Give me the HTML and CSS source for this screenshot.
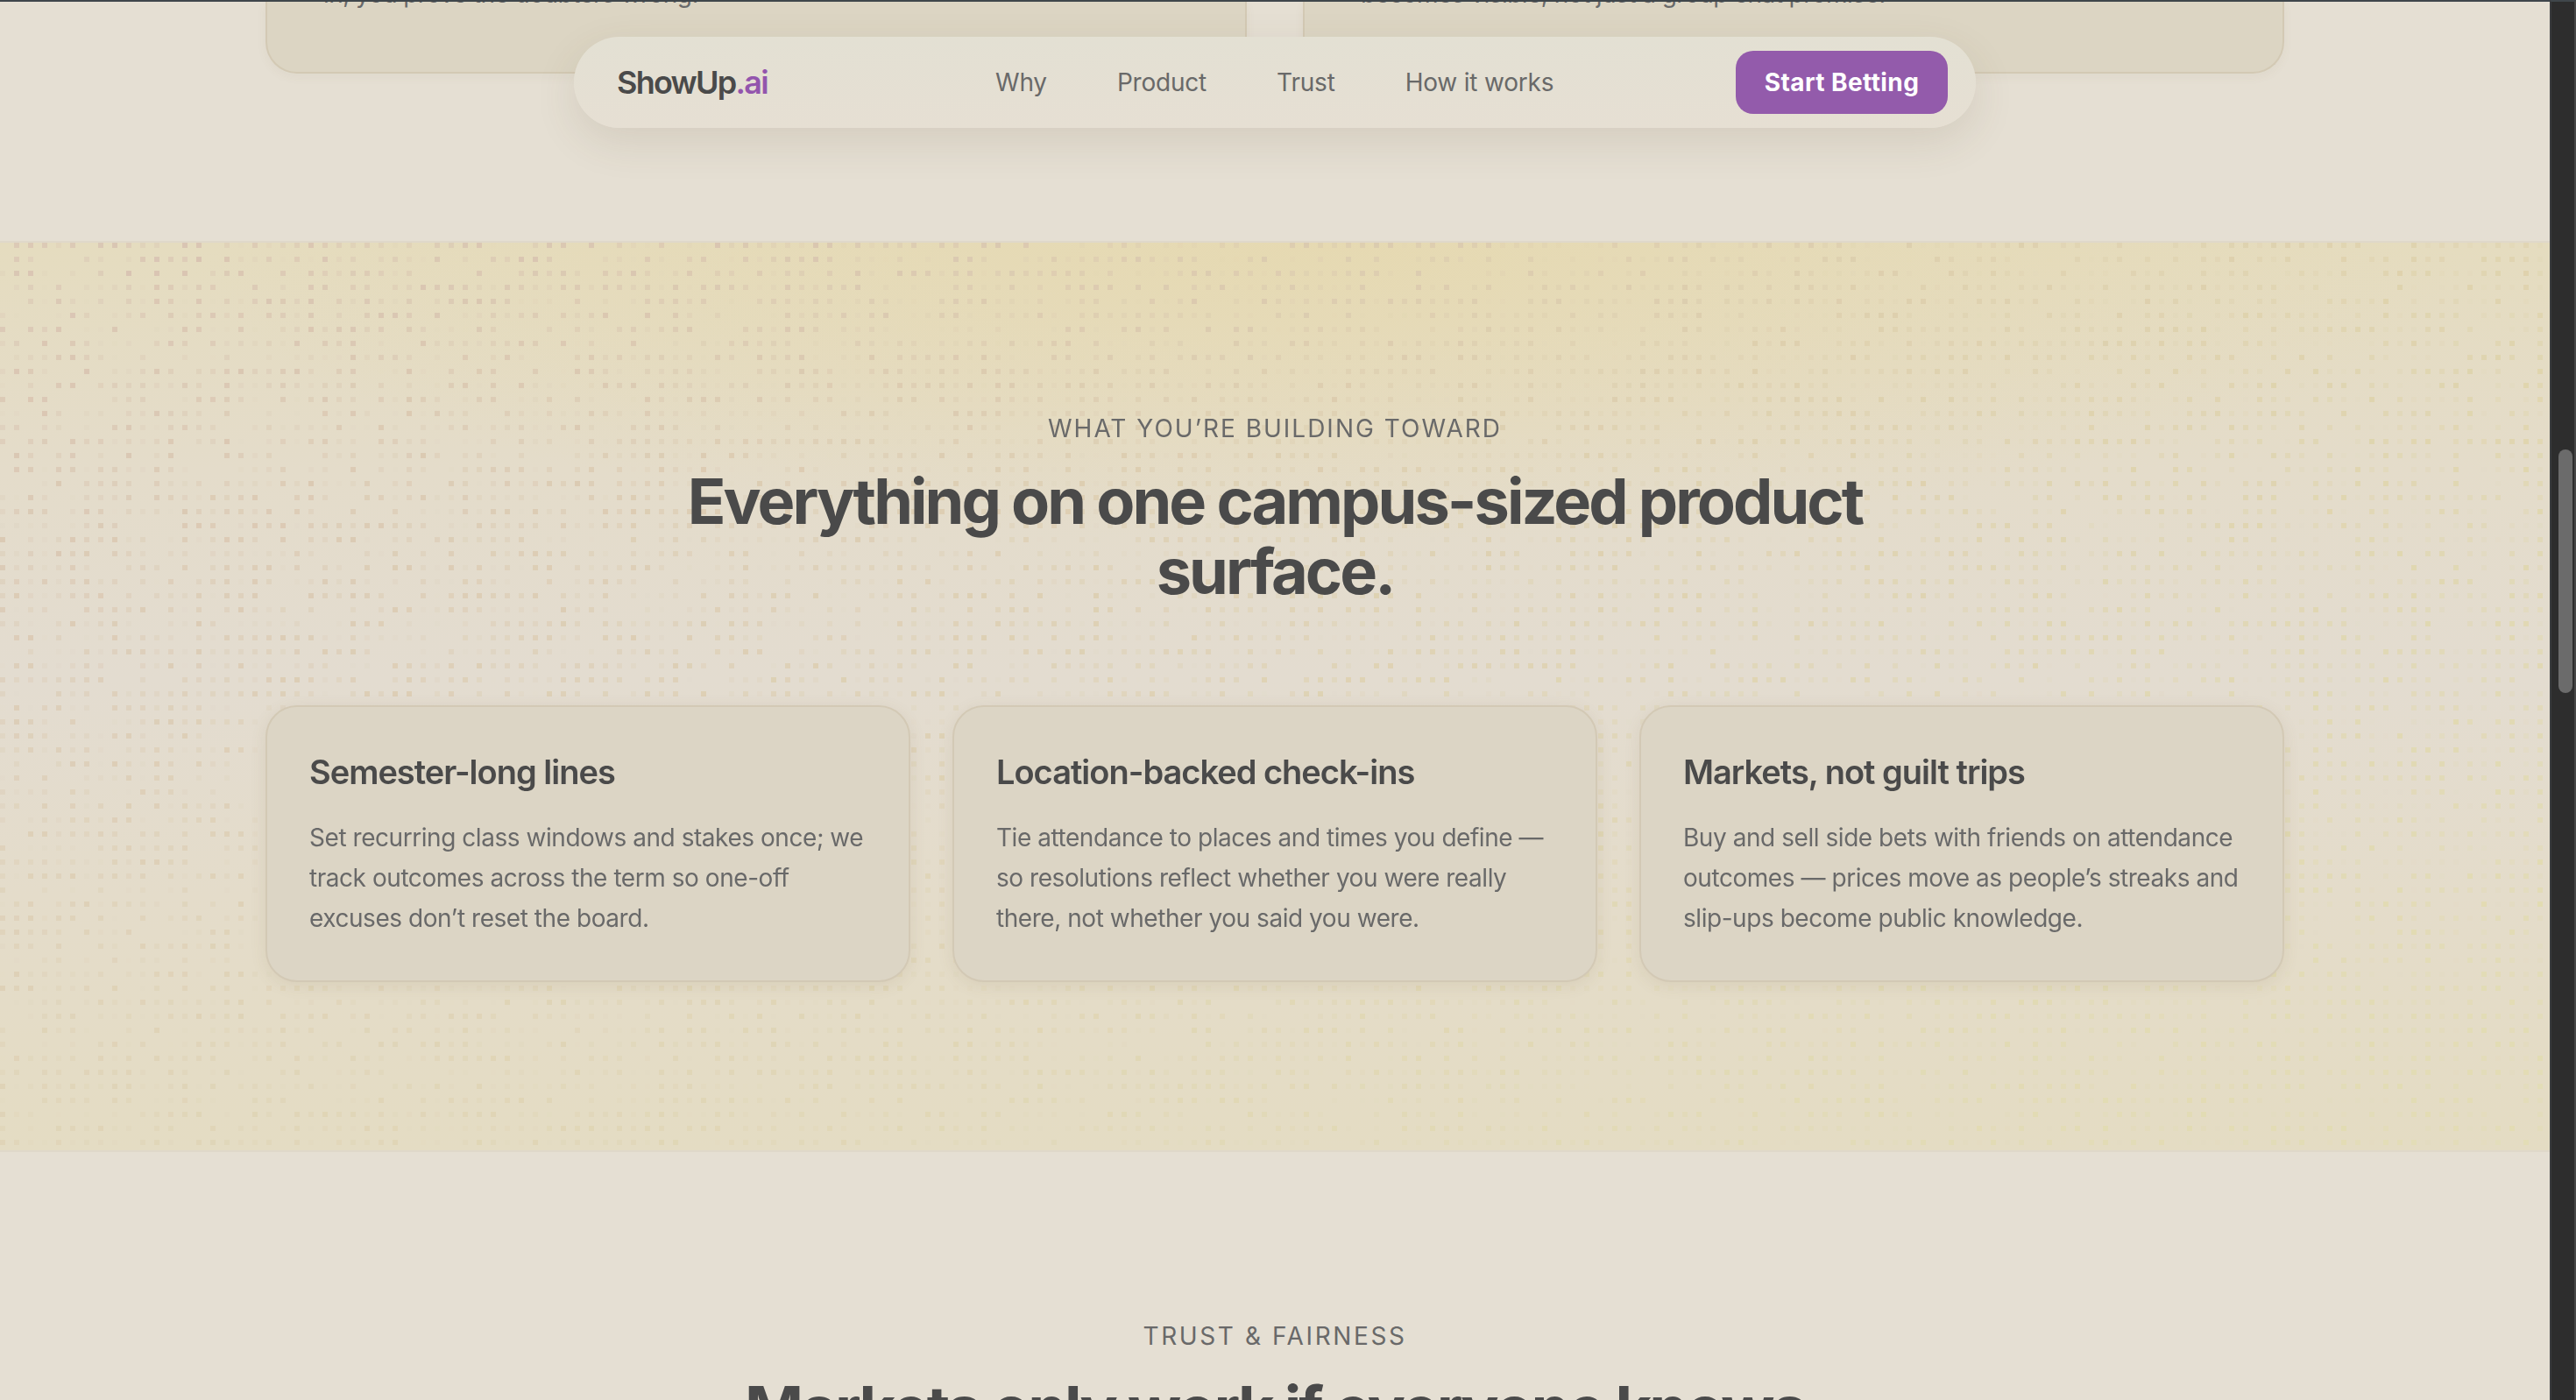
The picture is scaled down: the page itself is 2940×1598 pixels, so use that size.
FILE: index.html
```html
<!DOCTYPE html>
<html lang="en">
<head>
    <meta charset="UTF-8">
    <meta name="viewport" content="width=device-width, initial-scale=1.0">
    <title>ShowUp.ai</title>
    <link rel="stylesheet" href="styles.css">
</head>
<body>
    <div class="window">
        <div class="page">
            <nav class="nav">
                <a class="logo">ShowUp<span class="logo-ai">.ai</span></a>
                <div class="nav-links">
                    <a>Why</a>
                    <a>Product</a>
                    <a>Trust</a>
                    <a>How it works</a>
                </div>
                <a class="nav-cta">Start Betting</a>
            </nav>

            <div class="why-tail">
                <div class="why-card"><p>in, you prove the doubters wrong.</p></div>
                <div class="why-card"><p>becomes visible, not just a group chat promise.</p></div>
            </div>

            <section class="product">
                <canvas id="dots" class="dots"></canvas>
                <div class="section-inner">
                    <p class="eyebrow">WHAT YOU’RE BUILDING TOWARD</p>
                    <h2 class="section-title">Everything on one campus-sized product surface.</h2>
                    <div class="cards">
                        <div class="card">
                            <h3>Semester-long lines</h3>
                            <p>Set recurring class windows and stakes once; we track outcomes across the term so one-off excuses don’t reset the board.</p>
                        </div>
                        <div class="card">
                            <h3>Location-backed check-ins</h3>
                            <p>Tie attendance to places and times you define — so resolutions reflect whether you were really there, not whether you said you were.</p>
                        </div>
                        <div class="card">
                            <h3>Markets, not guilt trips</h3>
                            <p>Buy and sell side bets with friends on attendance outcomes — prices move as people’s streaks and slip-ups become public knowledge.</p>
                        </div>
                    </div>
                </div>
            </section>

            <section class="trust">
                <p class="eyebrow">TRUST &amp; FAIRNESS</p>
                <h2 class="section-title">Markets only work if everyone knows</h2>
            </section>
        </div>
        <div class="scrollbar"><div class="scrollbar-thumb"></div></div>
    </div>
    <script src="dots.js"></script>
</body>
</html>
```

FILE: styles.css
```css
* {
    box-sizing: border-box;
}
html, body {
    margin: 0;
    height: 100%;
    overflow: hidden;
}
body {
    font-family: Inter, "Liberation Sans", sans-serif;
    color: #4a4a4a;
    background-color: #e5dfd3;
}
.window {
    display: flex;
    height: 1598px;
}
.page {
    position: relative;
    flex: 1;
    height: 1598px;
    overflow: hidden;
    background-color: #e5dfd3;
    border-top: 2px solid #3f464b;
}

/* floating nav */
.nav {
    position: absolute;
    top: 40px;
    left: 655px;
    width: 1600px;
    height: 104px;
    display: flex;
    align-items: center;
    padding: 0 32px 0 49px;
    border-radius: 52px;
    background: linear-gradient(180deg, #e3e0d3, #e6dfd3);
    box-shadow: 0 16px 48px rgba(90, 75, 50, 0.12);
    z-index: 5;
}
.logo {
    width: 432px;
    font-size: 36px;
    font-weight: 600;
    letter-spacing: -1.75px;
}
.logo-ai {
    color: #9355ad;
}
.nav-links {
    display: flex;
    gap: 80px;
    font-size: 28px;
    letter-spacing: -0.2px;
    color: #696969;
}
.nav-cta {
    margin-left: auto;
    width: 242px;
    height: 72px;
    display: flex;
    align-items: center;
    justify-content: center;
    border-radius: 20px;
    background-color: #935bab;
    color: #fff;
    font-size: 28px;
    font-weight: 700;
    letter-spacing: 0.4px;
}

/* end of the previous section, cut by the top of the window */
.why-tail {
    height: 273px;
    display: flex;
    gap: 64px;
    width: 2304px;
    margin: 0 auto;
    align-items: flex-start;
}
.why-card {
    flex: 1;
    height: 82px;
    display: flex;
    align-items: flex-end;
    padding: 0 64px 66px;
    background-color: #dcd5c3;
    border: 2px solid #d3c9b4;
    border-top: 0;
    border-radius: 0 0 36px 36px;
    box-shadow: 0 4px 12px rgba(120, 100, 60, 0.05);
}
.why-card p {
    margin: 0;
    font-size: 28px;
    line-height: 46px;
    letter-spacing: -0.55px;
    color: #696969;
    white-space: nowrap;
}

.product {
    position: relative;
    height: 1040px;
    padding-top: 192px;
    border-top: 2px solid #dfd8ca;
    border-bottom: 2px solid #dfd8ca;
    background:
        radial-gradient(ellipse 1300px 340px at 52% 0%, rgba(230, 216, 172, 0.7), rgba(230, 216, 172, 0)),
        linear-gradient(180deg, #e5dcbf 0%, #e4dcca 25%, #e3dcd0 48%, #e4dcca 72%, #e4dcc3 100%);
}
.dots {
    position: absolute;
    top: 0;
    left: 0;
}
.section-inner {
    position: relative;
    width: 2304px;
    margin: 0 auto;
}
.eyebrow {
    margin: 0;
    text-align: center;
    font-size: 28px;
    line-height: 40px;
    letter-spacing: 2px;
    color: #696969;
}
.section-title {
    margin: 23px auto 0;
    max-width: 1440px;
    text-align: center;
    font-size: 72px;
    line-height: 80px;
    font-weight: 650;
    letter-spacing: -2.95px;
    color: #4a4a4a;
}
.cards {
    display: grid;
    grid-template-columns: repeat(3, 1fr);
    gap: 48px;
    margin-top: 113px;
}
.card {
    height: 316px;
    padding: 46px 40px 0 48px;
    background-color: #dcd5c5;
    border: 2px solid #d3c9b5;
    border-radius: 36px;
    box-shadow: 0 4px 18px rgba(120, 100, 60, 0.1);
}
.card h3 {
    margin: 0;
    font-size: 38px;
    line-height: 56px;
    font-weight: 600;
    letter-spacing: -1px;
}
.card p {
    margin: 24px 0 0;
    font-size: 28px;
    line-height: 46px;
    letter-spacing: -0.45px;
    color: #696969;
}

.trust {
    padding-top: 190px;
    background-color: #e5dfd3;
}
.trust .eyebrow {
    letter-spacing: 2.6px;
}

.scrollbar {
    width: 30px;
    height: 1598px;
    padding: 513px 6px 0 8px;
    background-color: #2d2d2d;
    border-left: 2px solid #3a3c3e;
    border-right: 2px solid #474747;
    border-top: 2px solid #3f464b;
}
.scrollbar-thumb {
    width: 16px;
    height: 278px;
    margin-top: -2px;
    border-radius: 8px;
    background-color: #6b6b6b;
}
```

FILE: dots.js
```js
// dotted texture behind the product section
const canvas = document.getElementById('dots');
const section = canvas.parentElement;
canvas.width = section.clientWidth;
canvas.height = section.clientHeight;
const ctx = canvas.getContext('2d');

let seed = 7;
function rand() {
    seed = (seed * 16807) % 2147483647;
    return seed / 2147483647;
}

for (let y = 0; y < canvas.height; y += 16) {
    const fade = 1 - 0.4 * y / canvas.height;
    for (let x = 0; x < canvas.width; x += 16) {
        const t = x / canvas.width;
        const v = y / canvas.height;
        const red = 216 + 6 * t + 4 * v;
        const green = 194 + 16 * t + 12 * v;
        const blue = 178 - 6 * t - 4 * v;
        const alpha = rand() * rand() > 0.05 ? rand() * fade : 0;
        ctx.fillStyle = `rgba(${red}, ${green}, ${blue}, ${alpha})`;
        ctx.fillRect(x, y, 6, 6);
    }
}
```
